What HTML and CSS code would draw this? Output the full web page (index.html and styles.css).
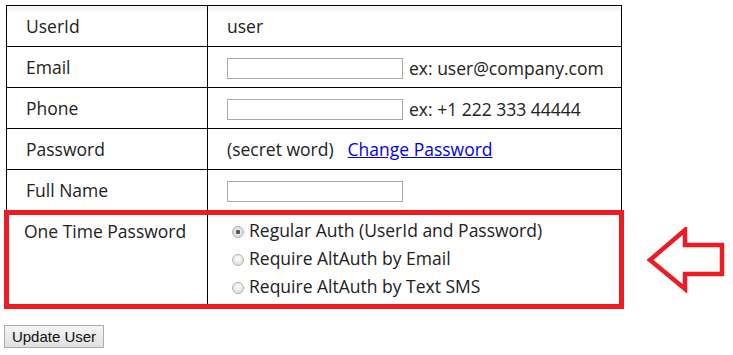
FILE: index.html
```html
<!DOCTYPE html>
<html lang="en">
<head>
  <meta charset="UTF-8" />
  <title>Edit User</title>
  <link rel="stylesheet" href="styles.css">
</head>
<body>

  <form class="user-form">
    <div class="user-area">
      <table class="user-table">
        <tr>
          <td class="etiqueta">UserId</td>
          <td>user</td>
        </tr>
        <tr>
          <td class="etiqueta">Email</td>
          <td><input type="text" class="campo" /><span class="ejemplo">ex: user@company.com</span></td>
        </tr>
        <tr>
          <td class="etiqueta">Phone</td>
          <td><input type="text" class="campo" /><span class="ejemplo">ex: +1 222 333 44444</span></td>
        </tr>
        <tr>
          <td class="etiqueta">Password</td>
          <td>(secret word)<a href="#" class="cambiar">Change Password</a></td>
        </tr>
        <tr>
          <td class="etiqueta">Full Name</td>
          <td><input type="text" class="campo" /></td>
        </tr>
        <tr class="resaltado">
          <td class="etiqueta">One Time Password</td>
          <td class="opciones">
            <label><input type="radio" name="otp" checked />Regular Auth (UserId and Password)</label>
            <label><input type="radio" name="otp" />Require AltAuth by Email</label>
            <label><input type="radio" name="otp" />Require AltAuth by Text SMS</label>
          </td>
        </tr>
      </table>

      <!-- flecha roja de la anotación -->
      <svg class="flecha" width="90" height="70" viewBox="0 0 90 70">
        <polygon points="4,33 39,3 39,18 76,18 76,47 39,47 39,62"
                 fill="none" stroke="#ed1c24" stroke-width="4.5" stroke-linejoin="miter" />
      </svg>
    </div>

    <button type="button" class="btn-actualizar">Update User</button>
  </form>

</body>
</html>
```

FILE: styles.css
```css
body {
  margin: 0;
  padding: 5px 0 0 4px;
  font-family: 'Open Sans', sans-serif;
  font-size: 17.5px;
  color: #222;
  background: #fff;
}

.user-area {
  position: relative;
  width: 620px;
}

.user-table {
  border-collapse: collapse;
  width: 620px;
}

.user-table td {
  border: 1px solid #000;
  padding: 0 8px 0 19px;
  height: 40px;
  line-height: 22px;
  vertical-align: middle;
  white-space: nowrap;
}

.user-table tr:first-child td {
  background: linear-gradient(#efefef, #fff 6px);
}

.user-table td.etiqueta {
  width: 162px;
  padding-right: 19px;
}

.campo {
  width: 176px;
  height: 21px;
  box-sizing: border-box;
  border: 1px solid #a9a9a9;
  margin: 0 6px 0 0;
  padding: 0 2px;
  vertical-align: middle;
  font-size: 13px;
}

.ejemplo {
  vertical-align: middle;
}

.cambiar {
  color: #0000ee;
  margin-left: 14px;
}

.resaltado {
  border: 5px solid #ed1c24;
}

.resaltado td {
  vertical-align: top;
  padding-top: 5px;
  height: auto;
}

.user-table .resaltado td.etiqueta {
  padding-left: 15px;
  padding-right: 0;
}

.user-table td.opciones {
  padding: 1px 8px 4px 19px;
}

.opciones label {
  display: block;
  line-height: 28px;
}

.opciones input[type="radio"] {
  -webkit-appearance: none;
  appearance: none;
  width: 12px;
  height: 12px;
  margin: 0 5px 0 5px;
  border: 1px solid #b4b4b4;
  border-radius: 50%;
  background: radial-gradient(circle at 50% 35%, #fdfdfd, #d6d6d6);
  vertical-align: -1px;
  box-sizing: border-box;
}

.opciones input[type="radio"]:checked {
  background: radial-gradient(circle, #555 0, #555 2px, #e9e9e9 2.5px, #cfcfcf);
}

.flecha {
  position: absolute;
  left: 642px;
  top: 222px;
}

.btn-actualizar {
  margin-top: 16px;
  width: 100px;
  height: 23px;
  padding: 0;
  font-family: 'Liberation Sans', Arial, sans-serif;
  font-size: 15px;
  color: #111;
  border: 1px solid #adadad;
  border-radius: 0;
  background: linear-gradient(#f4f4f4, #e1e1e1);
}
```
